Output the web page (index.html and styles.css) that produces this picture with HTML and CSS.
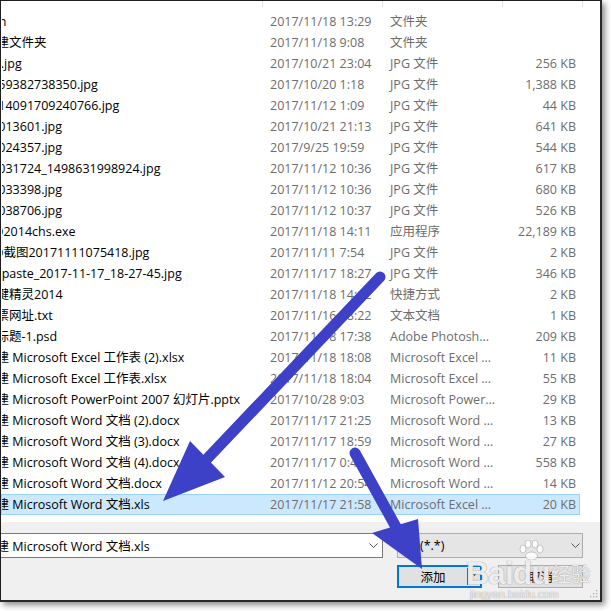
FILE: index.html
```html
<!DOCTYPE html>
<html lang="zh-CN">
<head>
<meta charset="utf-8">
<title>添加文件</title>
<link rel="stylesheet" href="styles.css">
</head>
<body>
<div class="window">
  <div class="header"><div></div><div></div><div></div><div></div></div>
  <div class="list">
    <div class="row"><div class="name"><span>Win</span></div><div class="date">2017/11/18 13:29</div><div class="type">文件夹</div><div class="size"></div></div>
    <div class="row"><div class="name"><span>新建文件夹</span></div><div class="date">2017/11/18 9:08</div><div class="type">文件夹</div><div class="size"></div></div>
    <div class="row"><div class="name"><span>pic.jpg</span></div><div class="date">2017/10/21 23:04</div><div class="type">JPG 文件</div><div class="size">256 KB</div></div>
    <div class="row"><div class="name"><span>1559382738350.jpg</span></div><div class="date">2017/10/20 1:18</div><div class="type">JPG 文件</div><div class="size">1,388 KB</div></div>
    <div class="row"><div class="name"><span>1514091709240766.jpg</span></div><div class="date">2017/11/12 1:09</div><div class="type">JPG 文件</div><div class="size">44 KB</div></div>
    <div class="row"><div class="name"><span>15013601.jpg</span></div><div class="date">2017/10/21 21:13</div><div class="type">JPG 文件</div><div class="size">641 KB</div></div>
    <div class="row"><div class="name"><span>15024357.jpg</span></div><div class="date">2017/9/25 19:59</div><div class="type">JPG 文件</div><div class="size">544 KB</div></div>
    <div class="row"><div class="name"><span>15031724_1498631998924.jpg</span></div><div class="date">2017/11/12 10:36</div><div class="type">JPG 文件</div><div class="size">617 KB</div></div>
    <div class="row"><div class="name"><span>15033398.jpg</span></div><div class="date">2017/11/12 10:36</div><div class="type">JPG 文件</div><div class="size">680 KB</div></div>
    <div class="row"><div class="name"><span>15038706.jpg</span></div><div class="date">2017/11/12 10:37</div><div class="type">JPG 文件</div><div class="size">526 KB</div></div>
    <div class="row"><div class="name"><span>QQ2014chs.exe</span></div><div class="date">2017/11/18 14:11</div><div class="type">应用程序</div><div class="size">22,189 KB</div></div>
    <div class="row"><div class="name"><span>QQ截图20171111075418.jpg</span></div><div class="date">2017/11/11 7:54</div><div class="type">JPG 文件</div><div class="size">2 KB</div></div>
    <div class="row"><div class="name"><span>Snipaste_2017-11-17_18-27-45.jpg</span></div><div class="date">2017/11/17 18:27</div><div class="type">JPG 文件</div><div class="size">346 KB</div></div>
    <div class="row"><div class="name"><span>按键精灵2014</span></div><div class="date">2017/11/18 14:12</div><div class="type">快捷方式</div><div class="size">2 KB</div></div>
    <div class="row"><div class="name"><span>发票网址.txt</span></div><div class="date">2017/11/16 18:22</div><div class="type">文本文档</div><div class="size">1 KB</div></div>
    <div class="row"><div class="name"><span>未标题-1.psd</span></div><div class="date">2017/11/18 17:38</div><div class="type">Adobe Photosh...</div><div class="size">209 KB</div></div>
    <div class="row"><div class="name"><span>新建 Microsoft Excel 工作表 (2).xlsx</span></div><div class="date">2017/11/18 18:08</div><div class="type">Microsoft Excel ...</div><div class="size">11 KB</div></div>
    <div class="row"><div class="name"><span>新建 Microsoft Excel 工作表.xlsx</span></div><div class="date">2017/11/18 18:04</div><div class="type">Microsoft Excel ...</div><div class="size">55 KB</div></div>
    <div class="row"><div class="name"><span>新建 Microsoft PowerPoint 2007 幻灯片.pptx</span></div><div class="date">2017/10/28 9:03</div><div class="type">Microsoft Power...</div><div class="size">29 KB</div></div>
    <div class="row"><div class="name"><span>新建 Microsoft Word 文档 (2).docx</span></div><div class="date">2017/11/17 21:25</div><div class="type">Microsoft Word ...</div><div class="size">13 KB</div></div>
    <div class="row"><div class="name"><span>新建 Microsoft Word 文档 (3).docx</span></div><div class="date">2017/11/17 18:59</div><div class="type">Microsoft Word ...</div><div class="size">27 KB</div></div>
    <div class="row"><div class="name"><span>新建 Microsoft Word 文档 (4).docx</span></div><div class="date">2017/11/17 0:45</div><div class="type">Microsoft Word ...</div><div class="size">558 KB</div></div>
    <div class="row"><div class="name"><span>新建 Microsoft Word 文档.docx</span></div><div class="date">2017/11/12 20:54</div><div class="type">Microsoft Word ...</div><div class="size">14 KB</div></div>
    <div class="row selected"><div class="name"><span>新建 Microsoft Word 文档.xls</span></div><div class="date">2017/11/17 21:58</div><div class="type">Microsoft Excel ...</div><div class="size">20 KB</div></div>
  </div>
  <div class="panel">
    <div class="inputs">
      <div class="fname"><span class="ftext">新建 Microsoft Word 文档.xls</span>
        <svg class="chev" width="9" height="6" viewBox="0 0 9 6"><polyline points="0.5,0.5 4.5,4.5 8.5,0.5" fill="none" stroke="#555" stroke-width="1"/></svg>
      </div>
      <div class="filter"><span class="ftype">(*.*)</span>
        <svg class="chev" width="9" height="6" viewBox="0 0 9 6"><polyline points="0.5,0.5 4.5,4.5 8.5,0.5" fill="none" stroke="#555" stroke-width="1"/></svg>
      </div>
    </div>
    <div class="buttons">
      <div class="btn primary"><span class="blabel">添加</span><span class="split"></span><span class="drop"><svg width="7" height="4" viewBox="0 0 7 4"><polygon points="0,0 7,0 3.5,4" fill="#333"/></svg></span></div>
      <div class="btn">取消</div>
    </div>
    <svg class="grip" width="8" height="8" viewBox="0 0 8 8">
      <rect x="6" y="0" width="1.3" height="1.3" fill="#aaa"/>
      <rect x="3" y="3" width="1.3" height="1.3" fill="#aaa"/><rect x="6" y="3" width="1.3" height="1.3" fill="#aaa"/>
      <rect x="0" y="6" width="1.3" height="1.3" fill="#aaa"/><rect x="3" y="6" width="1.3" height="1.3" fill="#aaa"/><rect x="6" y="6" width="1.3" height="1.3" fill="#aaa"/>
    </svg>
  </div>
</div>

<div class="watermark">
  <div class="wm-top">
    <span class="wm-bai">Bai</span>
    <span class="wm-du">
      <svg class="paw" width="26" height="20" viewBox="0 0 26 20">
        <ellipse cx="5" cy="9" rx="3" ry="4" />
        <ellipse cx="10" cy="4" rx="3" ry="4" />
        <ellipse cx="17" cy="4" rx="3" ry="4" />
        <ellipse cx="22" cy="9" rx="3" ry="4" />
        <ellipse cx="13.5" cy="16" rx="6" ry="4" />
      </svg>du</span>
    <span class="wm-jy">经验</span>
  </div>
  <div class="wm-url">jingyan.baidu.com</div>
</div>

<svg class="arrows" width="611" height="611" viewBox="0 0 611 611">
  <line x1="380" y1="277" x2="204" y2="462" stroke="#3d41c8" stroke-width="11" stroke-linecap="round"/>
  <polygon points="190,441 225,477 163,501" fill="#3d41c8"/>
  <line x1="355" y1="453" x2="396" y2="527" stroke="#3d41c8" stroke-width="11" stroke-linecap="round"/>
  <polygon points="372,533 418,519 422,569" fill="#3d41c8"/>
</svg>
</body>
</html>
```

FILE: styles.css
```css
html, body {
  margin: 0;
  padding: 0;
  background: #ffffff;
}

body {
  width: 611px;
  height: 611px;
  overflow: hidden;
  position: relative;
  font-family: "Open Sans", "Noto Sans CJK SC", sans-serif;
  font-size: 12.5px;
  color: #000;
}

.window {
  width: 599px;
  height: 599px;
  border-left: 1px solid #1e1e1e;
  border-top: 1px solid #1e1e1e;
  border-right: 2px solid #2a2a2a;
  border-bottom: 2px solid #2a2a2a;
  background: #ffffff;
  display: flex;
  flex-direction: column;
  box-shadow: 3px 3px 6px rgba(0, 0, 0, 0.45);
}

.header {
  height: 6px;
  display: grid;
  grid-template-columns: 262px 120px 120px 80px;
}

.header div {
  border-right: 1px solid #e5e5e5;
}

.list {
  margin-top: 4px;
  padding-bottom: 7px;
  display: flex;
  flex-direction: column;
}

.row {
  width: 579px;
  height: 21px;
  box-sizing: border-box;
  border: 1px solid transparent;
  display: grid;
  grid-template-columns: 261px 120px 120px 76px;
  align-items: center;
  line-height: 19px;
  white-space: nowrap;
}

.row.selected {
  background: #cce8ff;
  border-color: #99d1ff;
}

.name {
  overflow: hidden;
  color: #000;
}

.name span {
  display: inline-block;
  margin-left: -18px;
}

.date,
.type,
.size {
  color: #6d6d6d;
  overflow: hidden;
}

.date,
.type {
  padding-left: 7px;
}

.size {
  text-align: right;
  padding-right: 3px;
}

.panel {
  flex: 1;
  background: #f0f0f0;
  padding: 11px 17px 0 0;
  display: flex;
  flex-direction: column;
  gap: 7px;
  position: relative;
}

.inputs {
  display: flex;
  gap: 14px;
}

.fname {
  width: 382px;
  height: 25px;
  box-sizing: border-box;
  background: #ffffff;
  border: 1px solid #7a7a7a;
  border-left: none;
  display: flex;
  align-items: center;
  justify-content: space-between;
  overflow: hidden;
  white-space: nowrap;
  padding-right: 3px;
}

.ftext {
  margin-left: -17px;
}

.filter {
  width: 186px;
  height: 25px;
  box-sizing: border-box;
  background: #e5e5e5;
  border: 1px solid #adadad;
  display: flex;
  align-items: center;
  justify-content: space-between;
  padding: 0 1px 0 22px;
}

.chev {
  display: block;
  margin-right: 1px;
}

.buttons {
  display: flex;
  justify-content: flex-end;
  gap: 16px;
}

.btn {
  width: 85px;
  height: 23px;
  box-sizing: border-box;
  background: #e1e1e1;
  border: 1px solid #adadad;
  display: flex;
  align-items: center;
  justify-content: center;
  font-size: 12.5px;
  color: #000;
}

.btn.primary {
  border: 2px solid #0078d7;
  justify-content: flex-start;
}

.blabel {
  width: 68px;
  text-align: center;
}

.split {
  width: 1px;
  height: 17px;
  background: #5a5a5a;
}

.drop {
  flex: 1;
  display: flex;
  justify-content: center;
  align-self: flex-start;
  padding-top: 5px;
}

.drop svg {
  display: block;
}

.grip {
  position: absolute;
  right: 2px;
  bottom: 2px;
}

.watermark {
  position: absolute;
  left: 466px;
  top: 540px;
  color: rgba(255, 255, 255, 0.85);
  text-shadow: 0 0 1px rgba(110, 110, 110, 0.6), 0 0 1px rgba(110, 110, 110, 0.4);
  font-family: "Liberation Sans", "Noto Sans CJK SC", sans-serif;
  line-height: 1;
}

.wm-top {
  display: flex;
  align-items: flex-end;
}

.wm-bai {
  font-size: 32px;
  font-weight: bold;
  letter-spacing: -1px;
}

.wm-du {
  font-size: 32px;
  font-weight: bold;
  display: flex;
  flex-direction: column;
  align-items: center;
  letter-spacing: -1px;
}

.paw {
  display: block;
  fill: rgba(255, 255, 255, 0.85);
  stroke: rgba(130, 130, 130, 0.5);
  stroke-width: 0.8;
  margin-bottom: -3px;
}

.wm-jy {
  font-size: 20px;
  margin-left: 1px;
  margin-bottom: 4px;
}

.wm-url {
  font-size: 11px;
  margin-left: 4px;
  margin-top: 0;
}

.arrows {
  position: absolute;
  left: 0;
  top: 0;
  pointer-events: none;
}
```
